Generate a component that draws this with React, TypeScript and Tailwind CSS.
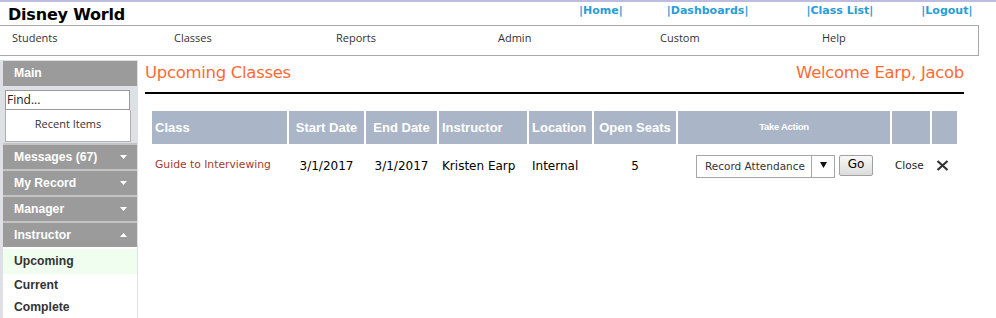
const navItems = ['Students', 'Classes', 'Reports', 'Admin', 'Custom', 'Help']
const topLinks = [
  { label: 'Home', x: 'ml-[579px]' },
  { label: 'Dashboards', x: 'ml-[44px]' },
  { label: 'Class List', x: 'ml-[58px]' },
  { label: 'Logout', x: 'ml-[48px]' },
]

function Caret({ up }: { up?: boolean }) {
  return (
    <svg width="7" height="4" viewBox="0 0 7 4" className="mr-[10px]">
      {up ? <path d="M0 4 L3.5 0 L7 4 Z" fill="#fff" /> : <path d="M0 0 L7 0 L3.5 4 Z" fill="#fff" />}
    </svg>
  )
}

function SideHeader({ label, caret }: { label: string; caret?: 'up' | 'down' }) {
  return (
    <div className="h-[26px] bg-[#9b9b9b] border-t-2 border-[#c2c4c6] flex items-center justify-between pl-[11px] text-white font-bold text-[12.2px] font-['Liberation_Sans',Arial,sans-serif]">
      <span>{label}</span>
      {caret && <Caret up={caret === 'up'} />}
    </div>
  )
}

const headers = [
  { label: 'Class', w: 'w-[135px]', left: true },
  { label: 'Start Date', w: 'w-[75px]' },
  { label: 'End Date', w: 'w-[71px]' },
  { label: 'Instructor', w: 'w-[88px]', left: true },
  { label: 'Location', w: 'w-[63px]', left: true },
  { label: 'Open Seats', w: 'w-[82px]' },
]

export default function App() {
  return (
    <div className="w-[996px] h-[318px] bg-white overflow-hidden font-['DejaVu_Sans',Verdana,sans-serif] text-black">
      <div className="h-[2px] bg-[#bcbce0]" />

      {/* Title bar */}
      <div className="h-[23px] flex items-center relative">
        <span className="absolute left-[8px] top-[1px] text-[16px] font-bold tracking-[-0.2px]">Disney World</span>
        {topLinks.map(l => (
          <span key={l.label} className={`${l.x} shrink-0 text-[11px] font-bold text-[#2a9dd6] -mt-[5px]`}>|{l.label}|</span>
        ))}
      </div>

      {/* Nav */}
      <div className="h-[31px] -ml-px mr-[17px] border border-[#a8a8aa] flex items-center pb-[4px] pl-[12px] overflow-hidden font-['Open_Sans',sans-serif] text-[11px] text-[#333]">
        {navItems.map(n => (
          <span key={n} className="w-[162px] shrink-0">{n}</span>
        ))}
      </div>

      <div className="flex">
        {/* Sidebar */}
        <div className="w-[138px] shrink-0 h-[280px] mt-[4px] bg-[#dde0e4] pl-[3px] pr-[1px] pt-[1px]">
          <div className="h-[25px] bg-[#9b9b9b] flex items-center pl-[11px] text-white font-bold text-[12.2px] font-['Liberation_Sans',Arial,sans-serif]">Main</div>
          <div className="pl-[2px] pt-[4px] pb-[1px]">
            <div className="w-[125px] h-[20px] bg-white border border-[#9a9a9a] flex items-center pl-[1px] text-[12px] font-['Open_Sans',sans-serif] text-[#222]">Find...</div>
            <div className="w-[126px] h-[32px] bg-white border border-[#b0b0b0] border-t-0 flex items-center justify-center pb-[3px] text-[11px] font-['Open_Sans',sans-serif] text-[#333]">Recent Items</div>
          </div>
          <SideHeader label="Messages (67)" caret="down" />
          <SideHeader label="My Record" caret="down" />
          <SideHeader label="Manager" caret="down" />
          <SideHeader label="Instructor" caret="up" />
          <div className="bg-white h-full pt-[2px] font-['Liberation_Sans',Arial,sans-serif] text-[12.2px] font-bold text-[#333]">
            <div className="h-[25px] bg-[#f0fef0] flex items-center pl-[11px]">Upcoming</div>
            <div className="h-[22px] flex items-center pl-[11px]">Current</div>
            <div className="h-[22px] flex items-center pl-[11px]">Complete</div>
          </div>
        </div>

        {/* Main */}
        <div className="flex-1 pl-[7px] pr-[32px]">
          <div className="h-[31px] flex items-end justify-between pb-[1px] text-[16.5px] text-[#ff6a33]">
            <span className="tracking-[-0.3px]">Upcoming Classes</span>
            <span className="tracking-[-0.3px]">Welcome Earp, Jacob</span>
          </div>
          <div className="h-[2px] bg-black mt-[5px]" />

          <div className="ml-[7px] mt-[17px] w-[806px]">
            <div className="flex gap-[2px] h-[33px] font-['Liberation_Sans',Arial,sans-serif] font-bold text-[13px] text-white">
              {headers.map(h => (
                <div key={h.label} className={`${h.w} shrink-0 bg-[#aab6c7] flex items-center ${h.left ? 'pl-[3px]' : 'justify-center'}`}>{h.label}</div>
              ))}
              <div className="w-[212px] shrink-0 bg-[#aab6c7] flex items-center justify-center text-[9.5px] tracking-[-0.3px]">Take Action</div>
              <div className="w-[38px] shrink-0 bg-[#aab6c7]" />
              <div className="w-[25px] shrink-0 bg-[#aab6c7]" />
            </div>

            <div className="flex gap-[2px] h-[40px] pt-[3px] items-center text-[12px]">
              <div className="w-[135px] shrink-0 pl-[3px] text-[10.75px] text-[#a33a2e]">Guide to Interviewing</div>
              <div className="w-[75px] shrink-0 text-center">3/1/2017</div>
              <div className="w-[71px] shrink-0 text-center">3/1/2017</div>
              <div className="w-[88px] shrink-0 pl-[3px]">Kristen Earp</div>
              <div className="w-[63px] shrink-0 pl-[3px]">Internal</div>
              <div className="w-[82px] shrink-0 text-center">5</div>
              <div className="w-[212px] shrink-0 flex items-center pl-[18px]">
                <div className="w-[139px] h-[23px] border border-[#a6a6a6] flex items-center mt-[2px]">
                  <span className="flex-1 pl-[8px] pt-[1px] text-[10.5px] text-[#333]">Record Attendance</span>
                  <span className="w-[23px] h-full border-l border-[#a6a6a6] flex items-start justify-center pt-[6px]">
                    <svg width="7" height="6" viewBox="0 0 7 6"><path d="M0 0 L7 0 L3.5 6 Z" fill="#111" /></svg>
                  </span>
                </div>
                <button className="ml-[4px] w-[34px] h-[21px] border border-[#a0a0a0] rounded-[2px] bg-gradient-to-b from-[#f8f8f8] to-[#dcdcdc] text-[12px] leading-none pb-[3px]">Go</button>
              </div>
              <div className="w-[38px] shrink-0 text-[10.5px] text-[#222] pl-[3px]">Close</div>
              <div className="w-[25px] shrink-0 flex pl-[4px]">
                <svg width="13" height="11" viewBox="0 0 13 11">
                  <path d="M1.5 1 L11.5 10 M11.5 1 L1.5 10" stroke="#333" strokeWidth="2.2" />
                </svg>
              </div>
            </div>
          </div>
        </div>
      </div>
    </div>
  )
}
